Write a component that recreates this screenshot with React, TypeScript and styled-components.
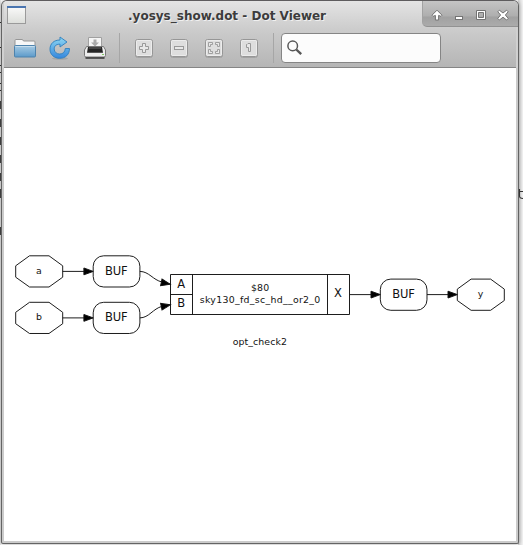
import React from 'react';
import styled, { createGlobalStyle } from 'styled-components';

const GlobalStyle = createGlobalStyle`
  * { box-sizing: border-box; }
  body { margin: 0; background: #f4f4f4; font-family: 'DejaVu Sans', sans-serif; overflow: hidden; }
`;

const Desktop = styled.div`
  position: relative;
  width: 523px;
  height: 545px;
  padding: 0 4px 1px 1px;
  overflow: hidden;
  background: linear-gradient(90deg, #e9e9e9 1px, #fff 1px, #fff 518px, #d6d6d6 518px, #f4f4f4 523px);
`;

const Behind = styled.svg`
  position: absolute;
  inset: 0;
`;

const Window = styled.div`
  position: relative;
  display: flex;
  flex-direction: column;
  width: 518px;
  height: 544px;
  border: 1px solid #646464;
  border-top-color: #5e5c5e;
  border-radius: 6px 6px 2px 2px;
  background: #cbcbcb;
  overflow: hidden;
  box-shadow: 0 0 4px rgba(0, 0, 0, 0.35);
`;

const Header = styled.header`
  display: flex;
  flex-direction: column;
  height: 67px;
  margin: 0 2px;
  border-bottom: 1px solid #858585;
  background: linear-gradient(#e4e4e4, #cecece 26px, #cbcbcb 30px, #b5b5b5 66px);
  box-shadow: -2px 0 #d0d0d0, 2px 0 #d0d0d0;
`;

const TitleBar = styled.div`
  display: grid;
  grid-template-columns: 28px 1fr 96px;
  height: 26px;
  margin-right: -2px;
`;

const AppIcon = styled.svg`
  width: 22px;
  height: 20px;
  margin: 4px 0 0 2px;
`;

const Title = styled.h1`
  margin: 0;
  padding-left: 96px;
  font-size: 12px;
  line-height: 31px;
  height: 26px;
  font-weight: 700;
  color: #3c3c3c;
  text-shadow: 1px 1px #f0f0f0;
  white-space: nowrap;
`;

const Controls = styled.div`
  display: flex;
  padding: 5px 0 0 4px;
  border-bottom: 1px solid #929292;
  border-left: 1px solid #a2a2a2;
  border-bottom-left-radius: 5px;
  background: linear-gradient(#c5c5c5, #aeaeae 15px, #a1a1a1 16px, #ababab);
`;

const ControlIcon = styled.svg`
  flex: 0 0 22px;
  width: 22px;
  height: 18px;
  fill: #fff;
  stroke: #737373;
`;

const Toolbar = styled.div`
  display: flex;
  align-items: center;
  height: 40px;
  padding: 2px 0 0 7px;
`;

const ToolIcon = styled.svg<{ $gap?: number }>`
  flex: none;
  width: 28px;
  height: 28px;
  margin-right: ${(p) => p.$gap ?? 7}px;
`;

const Separator = styled.i<{ $gap: number }>`
  width: 1px;
  height: 30px;
  margin-right: ${(p) => p.$gap}px;
  background: #a6a6a6;
`;

const Search = styled.label`
  display: flex;
  align-items: center;
  width: 160px;
  height: 30px;
  padding-left: 4px;
  border: 1px solid #858585;
  border-radius: 4px;
  background: #fcfcfc;
`;

const Canvas = styled.main`
  height: 473px;
  margin: 0 2px;
  background: #fff;
`;

const Graph = styled.svg`
  display: block;
  width: 512px;
  height: 473px;
  fill: none;
  stroke: #111;
  stroke-width: 0.95;
  text {
    fill: #111;
    stroke: none;
    font-family: 'DejaVu Sans', sans-serif;
    text-anchor: middle;
  }
`;

const Port = ({ x, y, label }: { x: number; y: number; label: string }) => (
  <g transform={`translate(${x} ${y})`}>
    <path d="M0 10V21.4L13.8 31.2H33.3L47 21.4V10L33.3 0H13.8Z" />
    <text x="23.3" y="18.2" fontSize="9.4">{label}</text>
  </g>
);

const Buffer = ({ x, y }: { x: number; y: number }) => (
  <g transform={`translate(${x} ${y})`}>
    <rect width="46.7" height="31.2" rx="10.5" />
    <text x="23.2" y="18.8" fontSize="11.5" textLength="22.6">BUF</text>
  </g>
);

const Arrow = ({ x, y, angle = 0 }: { x: number; y: number; angle?: number }) => (
  <path d="M0 0L-9.3 -3.4V3.4Z" fill="#000" transform={`translate(${x} ${y}) rotate(${angle})`} />
);

const Zoomer = ({ gap, children }: { gap?: number; children: React.ReactNode }) => (
  <ToolIcon viewBox="0 0 28 28" $gap={gap}>
    <rect x="5.5" y="6.5" width="17" height="17" rx="2" fill="none" stroke="#a2a2a2" />
    <rect x="5.5" y="5.5" width="17" height="17" rx="2" fill="#dedede" stroke="#969696" />
    <rect x="6.5" y="6.5" width="15" height="15" rx="1" fill="none" stroke="#ececec" />
    <g fill="#e8e8e8" stroke="#999">{children}</g>
  </ToolIcon>
);

export default function App() {
  return (
    <>
      <GlobalStyle />
      <Desktop>
        <Behind width="523" height="545">
          {[22, 47, 65, 72, 83, 90].map((y) => <path key={y} d={`M0 ${y}.5H2`} stroke="#333" />)}
          {[101, 119, 137, 155, 173, 189, 227].map((y) => <rect key={y} y={y} width="1" height={y === 189 ? 9 : 8} fill="#484848" />)}
        </Behind>
        <Window>
          <Header>
            <TitleBar>
              <AppIcon viewBox="0 0 22 20">
                <defs><linearGradient id="page" x2="0" y2="1"><stop stopColor="#fafafa" /><stop offset="1" stopColor="#dcdeda" /></linearGradient></defs>
                <rect x="1.5" y="1.5" width="18" height="17" fill="url(#page)" stroke="#9a9a9a" />
                <path d="M1 2H20" stroke="#4a75b0" strokeWidth="2" />
              </AppIcon>
              <Title>.yosys_show.dot - Dot Viewer</Title>
              <Controls>
                <ControlIcon viewBox="0 0 22 18"><path d="M10 4.2L15 9.2L14 10.4L11.6 9.4V14H8.4V9.4L6 10.4L5 9.2Z" strokeLinejoin="round" /></ControlIcon>
                <ControlIcon viewBox="0 0 22 18"><rect x="6.5" y="10.5" width="7" height="3" /></ControlIcon>
                <ControlIcon viewBox="0 0 22 18"><path fillRule="evenodd" d="M5.5 4.5H14.5V13.5H5.5ZM7.5 6.5V11.5H12.5V6.5Z" /></ControlIcon>
                <ControlIcon viewBox="0 0 22 18"><path d="M6.4 4.2L10 7L13.6 4.2L15.2 5.8L12.4 9L15.2 12.4L13.6 14L10 11.2L6.4 14L4.8 12.4L7.6 9L4.8 5.8Z" strokeLinejoin="round" /></ControlIcon>
              </Controls>
            </TitleBar>
            <Toolbar>
              <ToolIcon viewBox="0 0 28 28">
                <defs><linearGradient id="folder" x2="0" y2="1"><stop stopColor="#a9cce4" /><stop offset="1" stopColor="#5c9aca" /></linearGradient></defs>
                <path d="M4 11V6.5Q4 5.5 5 5.5H11Q12 5.5 12.5 7H23Q24 7 24 8V13H4Z" fill="#f7f7f7" stroke="#979797" />
                <rect x="3.5" y="11.5" width="21" height="11.5" rx="1" fill="url(#folder)" stroke="#4e83ad" />
                <path d="M4.5 12.5H23.5" stroke="#c7deed" />
              </ToolIcon>
              <ToolIcon viewBox="0 0 28 28">
                <defs><linearGradient id="refresh" x2="0" y2="1"><stop stopColor="#8ed8f3" /><stop offset="1" stopColor="#3687dd" /></linearGradient></defs>
                <ellipse cx="14" cy="24.5" rx="8" ry="1.3" fill="#979797" opacity=".6" />
                <path d="M14 3L21 8L14 13V10.2C9.5 10.2 8.2 12.5 8.2 15C8.2 18 10.5 20 13.7 20C17 20 19 18 19.3 14.5H23.5C23.4 20.5 19.5 24.3 13.8 24.3C8 24.3 4 20.5 4 15.2C4 9.5 8 6 14 6Z" fill="url(#refresh)" stroke="#2c7fbe" strokeWidth=".9" />
              </ToolIcon>
              <ToolIcon viewBox="0 0 28 28" $gap={10}>
                <path d="M5.5 14L7.5 11.5H20.5L22.5 14Z" fill="#777" />
                <path d="M7.5 14.5V3.5H20.5V14.5Z" fill="#f5f5f5" stroke="#a0a0a0" />
                <path d="M12.5 5.5H15.5V8.5H18L14 12.5L10 8.5H12.5Z" fill="#aaa" />
                <path d="M5.5 12.5H22.5L24.5 16V21.5Q24.5 23 23 23H5Q3.5 23 3.5 21.5V16Z" fill="#eee" stroke="#777" />
                <path d="M7 13H21L22 18.8H6Z" fill="#252525" />
                <path d="M8 14H20" stroke="#666" />
                <path d="M4.5 24H23.5" stroke="#333" strokeWidth="1.5" />
                <path d="M21 20.5H23" stroke="#83ca64" />
              </ToolIcon>
              <Separator $gap={10} />
              <Zoomer><path d="M12.5 9.5H15.5V12.5H18.5V15.5H15.5V18.5H12.5V15.5H9.5V12.5H12.5Z" /></Zoomer>
              <Zoomer><rect x="9.5" y="12.5" width="9" height="3" /></Zoomer>
              <Zoomer><path d="M8.5 8.5H12.5V10.5H10.5V12.5H8.5ZM15.5 8.5H19.5V12.5H17.5V10.5H15.5ZM8.5 15.5H10.5V17.5H12.5V19.5H8.5ZM17.5 15.5H19.5V19.5H15.5V17.5H17.5Z" strokeWidth=".9" /></Zoomer>
              <Zoomer gap={10}><path d="M12 10.5L13 9.5H15.5V17.5H13.5V13.5H11.5V10.5Z" /></Zoomer>
              <Separator $gap={7} />
              <Search>
                <svg width="18" height="18" viewBox="0 0 18 18" fill="none" stroke="#575757">
                  <circle cx="6.7" cy="6.9" r="4.8" strokeWidth="1.5" />
                  <path d="M10.3 10.5L15.2 15.2" strokeWidth="2.4" />
                </svg>
              </Search>
            </Toolbar>
          </Header>
          <Canvas>
            <Graph viewBox="4 68 512 473">
              <Port x={15.7} y={255.8} label="a" />
              <Port x={15.7} y={302.3} label="b" />
              <Port x={457.3} y={279.1} label="y" />
              <Buffer x={93.2} y={255.8} />
              <Buffer x={93.2} y={302.3} />
              <Buffer x={380.3} y={279.1} />
              <path d="M62.7 271.4H84M62.7 317.9H84M349.8 294.6H371M427 294.6H448" />
              <path d="M139.9 271.4C149 271.5 153 280 162 282M139.9 317.9C149 317.8 153 308.6 162 306.4" />
              <Arrow x={93.2} y={271.4} />
              <Arrow x={93.2} y={317.9} />
              <Arrow x={380.3} y={294.6} />
              <Arrow x={457.3} y={294.6} />
              <Arrow x={170.4} y={284.3} angle={12} />
              <Arrow x={170.4} y={304.8} angle={-12} />
              <path d="M170.5 274.5H349.5V314.5H170.5ZM192.5 274.5V314.5M327.5 274.5V314.5M170.5 294.5H192.5" />
              <text x="181.2" y="287.5" fontSize="11.5">A</text>
              <text x="181.2" y="307.3" fontSize="11.5">B</text>
              <text x="338" y="297.3" fontSize="11.5">X</text>
              <text x="260" y="291" fontSize="9.4" textLength="18.2">$80</text>
              <text x="260" y="303" fontSize="9.4" textLength="120.6">sky130_fd_sc_hd__or2_0</text>
              <text x="259.8" y="345" fontSize="9.4" textLength="54.2">opt_check2</text>
            </Graph>
          </Canvas>
        </Window>
        <Behind width="523" height="545"><path d="M519.5 189V196Q519.5 198.5 523 198.5M519 191.5H523" fill="none" stroke="#333" strokeWidth="1.1" /></Behind>
      </Desktop>
    </>
  );
}
